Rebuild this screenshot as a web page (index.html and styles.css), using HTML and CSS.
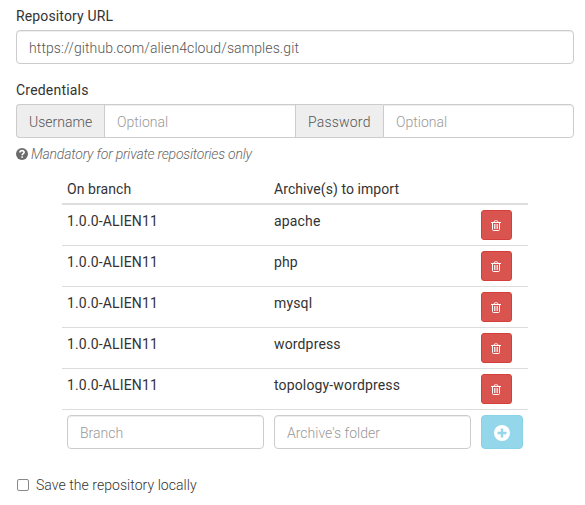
FILE: index.html
```html
<!DOCTYPE html>
<html lang="en">
<head>
<meta charset="utf-8">
<title>Import from Git</title>
<link rel="stylesheet" href="styles.css">
</head>
<body>
<svg width="0" height="0" class="sprite">
  <symbol id="trash" viewBox="0 0 10 11">
    <path d="M0 2.500h10M3 2.500Q3 .700 4.500 .700h1Q7 .700 7 2.500M1.500 2.500v7q0 1 1 1h5q1 0 1-1v-7" fill="none" stroke="#fff"/>
    <path d="M3.500 4v5M5 4v5M6.500 4v5" fill="none" stroke="#fff" stroke-width=".8"/>
  </symbol>
</svg>
<form class="form">
  <label class="label" for="url">Repository URL</label>
  <input class="control url" id="url" type="text" value="https://github.com/alien4cloud/samples.git">

  <label class="label credentials" for="user">Credentials</label>
  <div class="group">
    <span class="addon">Username</span>
    <input class="control user" id="user" type="text" placeholder="Optional">
    <span class="addon middle">Password</span>
    <input class="control pass" type="text" placeholder="Optional">
  </div>
  <p class="help">
    <svg class="question" viewBox="0 0 12 12"><circle cx="6" cy="6" r="6" fill="#6b6b6b"/><path d="M3.9 4.5C4 3.2 4.9 2.6 6 2.6c1.2 0 2.1.7 2.1 1.7C8.100 5.600 6.200 5.700 6.200 7.300" fill="none" stroke="#fff" stroke-width="1.600"/><path d="M5.300 8.200h1.700v1.600H5.300z" fill="#fff"/></svg>
    <em>Mandatory for private repositories only</em>
  </p>

  <div class="table">
    <div class="row head"><span>On branch</span><span>Archive(s) to import</span></div>
    <div class="row"><span>1.0.0-ALIEN11</span><span>apache</span><button type="button" class="btn delete"><svg><use href="#trash"/></svg></button></div>
    <div class="row"><span>1.0.0-ALIEN11</span><span>php</span><button type="button" class="btn delete"><svg><use href="#trash"/></svg></button></div>
    <div class="row"><span>1.0.0-ALIEN11</span><span>mysql</span><button type="button" class="btn delete"><svg><use href="#trash"/></svg></button></div>
    <div class="row"><span>1.0.0-ALIEN11</span><span>wordpress</span><button type="button" class="btn delete"><svg><use href="#trash"/></svg></button></div>
    <div class="row"><span>1.0.0-ALIEN11</span><span>topology-wordpress</span><button type="button" class="btn delete"><svg><use href="#trash"/></svg></button></div>
    <div class="row entry">
      <input class="control" type="text" placeholder="Branch">
      <input class="control" type="text" placeholder="Archive's folder">
      <button type="button" class="btn add"><svg viewBox="0 0 16 16"><circle cx="8" cy="8" r="8" fill="#fff"/><path d="M8 3.500v9M3.500 8h9" stroke="#94d7ea" stroke-width="2.400"/></svg></button>
    </div>
  </div>

  <label class="save"><input class="check" type="checkbox"><span>Save the repository locally</span></label>
</form>
</body>
</html>
```

FILE: styles.css
```css
* {
  box-sizing: border-box;
}

body {
  margin: 0;
  background: #fff;
  color: #333;
  font: 300 14px/20px Roboto, sans-serif;
}

.sprite,
.label {
  display: block;
}

.sprite {
  height: 0;
}

.form {
  width: 558px;
  margin: 6px 0 0 16px;
}

.label {
  margin-bottom: 4px;
  font-weight: 400;
  letter-spacing: .14px;
}

.credentials {
  margin-top: 16px;
  letter-spacing: .2px;
}

.control {
  display: block;
  width: 100%;
  min-width: 0;
  height: 34px;
  padding: 7px 12px 5px;
  border: 1px solid #ccc;
  border-radius: 4px;
  background: #fff;
  box-shadow: inset 0 1px 1px rgba(0, 0, 0, .075);
  color: #555;
  font: inherit;
}

.url {
  letter-spacing: .1px;
}

.control::placeholder {
  color: #999;
}

.group {
  display: flex;
}

.addon {
  flex: none;
  width: 88px;
  height: 34px;
  padding: 7px 0 5px 12px;
  border: 1px solid #ccc;
  border-right: 0;
  border-radius: 4px 0 0 4px;
  background: #eee;
  color: #555;
}

.middle {
  width: 87px;
  padding-left: 12px;
  border-left: 0;
  border-radius: 0;
  letter-spacing: .2px;
}

.user {
  flex: none;
  width: 192px;
  border-radius: 0;
}

.pass {
  flex: 1;
  border-radius: 0 4px 4px 0;
}

.help {
  display: flex;
  align-items: center;
  gap: 3px;
  margin: 6px 0 10px;
  color: #666;
  letter-spacing: -.22px;
}

.question {
  width: 12px;
  height: 12px;
}

.table {
  width: 466px;
  margin-left: 46px;
  font-weight: 400;
}

.row {
  display: grid;
  grid-template-columns: 197px 197px auto;
  column-gap: 10px;
  align-items: start;
  justify-items: start;
  height: 41px;
  padding: 5px;
  border-bottom: 1px solid #ddd;
}

.row span {
  padding-top: 1px;
  letter-spacing: .15px;
}

.head {
  height: 31px;
  border-bottom-width: 2px;
}

.head span {
  padding-top: 0;
  letter-spacing: .07px;
}

.entry {
  height: 44px;
  border-bottom: 0;
  font-weight: 300;
}

.btn {
  display: flex;
  align-items: center;
  justify-content: center;
  padding: 0;
  border: 1px solid;
  border-radius: 3px;
}

.delete {
  width: 31px;
  height: 30px;
  padding: 1px 1px 0 0;
  border-color: #d43f3a;
  background: #d9534f;
}

.delete svg {
  width: 10px;
  height: 11px;
}

.add {
  width: 42px;
  height: 34px;
  padding-top: 2px;
  border-color: #89d3e8;
  border-radius: 4px;
  background: #94d7ea;
}

.add svg {
  width: 16px;
  height: 16px;
}

.save {
  display: flex;
  align-items: center;
  gap: 7px;
  margin-top: 21px;
  letter-spacing: .05px;
}

.check {
  appearance: none;
  width: 12px;
  height: 12px;
  margin: 0 0 0 1px;
  border: 1px solid #888;
  border-radius: 2px;
  background: #fff;
}
```
